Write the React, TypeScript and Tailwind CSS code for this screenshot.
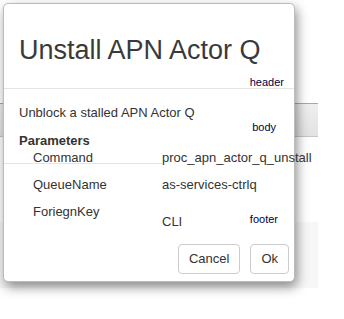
export default function App() {
  return (
    <div className="relative h-[319px] w-[344px] overflow-hidden bg-white font-['Liberation_Sans',Arial,sans-serif] text-[#333]">
      {/* page behind the dialog */}
      <div className="pt-[103px]">
        <div className="h-[34px] w-[318px] border-y border-t-[#a9a9a9] border-b-[#c6c6c6] bg-gradient-to-b from-[#efefef] to-[#e2e2e2]" />
        <div className="mt-[85px] h-[66px] w-[318px] bg-[#f7f7f7]" />
      </div>

      {/* dialog */}
      <div className="absolute left-[3px] top-[3px] w-[292px] rounded-[5px] border border-[#bcbcbc] bg-white shadow-[2px_5px_12px_rgba(0,0,0,0.45)]">
        {/* header */}
        <div className="border-b border-[#e5e5e5] pt-[30px]">
          <h1 className="pl-[15px] text-[27px] leading-[33px] whitespace-nowrap text-[#3a3a3a]">Unstall APN Actor Q</h1>
          <div className="mt-[9px] flex justify-end pr-[10px] text-[11px] leading-[12px] text-[#000040]">header</div>
        </div>

        {/* body */}
        <div className="pt-[16px] text-[13px]">
          <p className="pl-[15px] leading-[16px]">Unblock a stalled APN Actor Q</p>
          <div className="flex justify-end pr-[18px] text-[11px] leading-[12px] text-[#000040]">body</div>
          <p className="pl-[15px] font-bold leading-[16px]">Parameters</p>

          <div className="flex">
            <div className="w-[158px] shrink-0 border-b border-[#e5e5e5] pl-[29px] pt-[3px] leading-[11px]">Command</div>
            <div className="whitespace-nowrap pt-[3px] leading-[11px]">proc_apn_actor_q_unstall</div>
          </div>
          <div className="flex pt-[12px] leading-[18px]">
            <div className="w-[158px] shrink-0 pl-[29px]">QueueName</div>
            <div className="whitespace-nowrap">as-services-ctrlq</div>
          </div>
          <div className="flex pt-[9px]">
            <div className="w-[158px] shrink-0 pl-[29px] leading-[18px]">ForiegnKey</div>
            <div className="flex-1 pt-[10px] leading-[18px]">CLI</div>
            <div className="pr-[16px] pt-[10px] text-[11px] leading-[12px] text-[#000040]">footer</div>
          </div>
        </div>

        {/* footer */}
        <div className="flex justify-end gap-[10px] pb-[7px] pr-[5px] pt-[13px] text-[13px]">
          <button className="h-[30px] rounded-[4px] border border-[#cccccc] bg-white px-[10px] text-[#333]">Cancel</button>
          <button className="h-[30px] rounded-[4px] border border-[#cccccc] bg-white px-[10px] text-[#333]">Ok</button>
        </div>
      </div>
    </div>
  );
}
